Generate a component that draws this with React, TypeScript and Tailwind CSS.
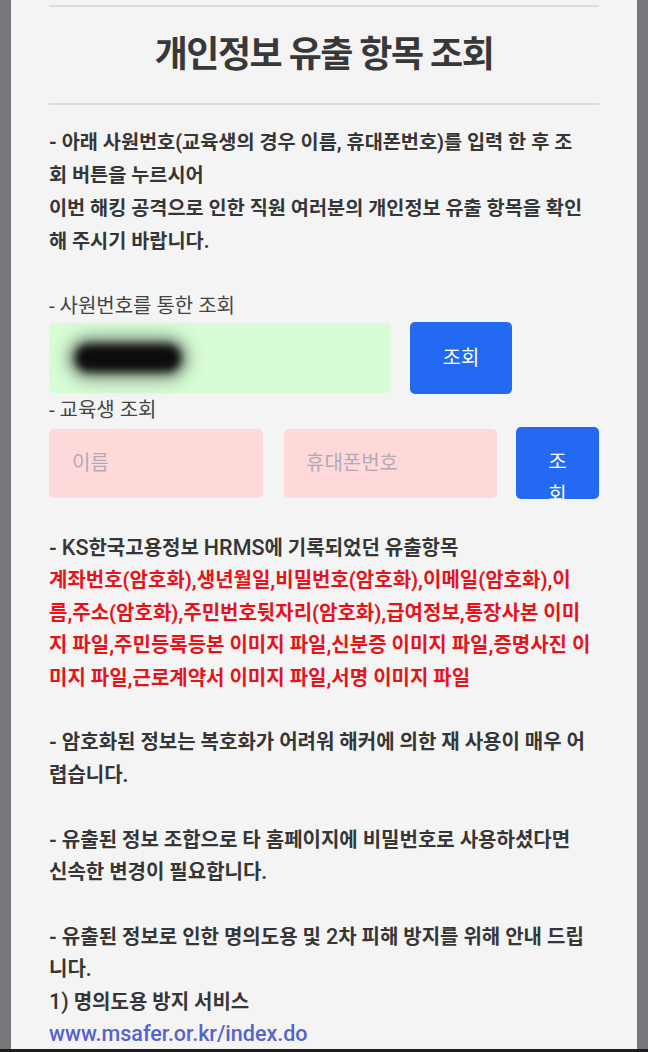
import React from "react";

const FONT = { fontFamily: 'Roboto, "Noto Sans CJK KR", "Noto Sans", sans-serif' };

export default function App() {
  return (
    <div className="min-h-screen bg-[#78787c] px-[11px]" style={FONT}>
      <div className="h-[1049px] overflow-hidden bg-[#f4f4f4] px-[38px] pt-[5px]">
        <div className="h-[2px] bg-[#dcdcdc]" />
        <h1 className="text-center text-[36px] font-bold leading-[96px] tracking-[-1.5px] text-[#383838]">
          개인정보 유출 항목 조회
        </h1>
        <div className="h-[2px] bg-[#dcdcdc]" />

        <p className="mt-[21px] whitespace-nowrap text-[19.7px] font-bold leading-[33px] text-[#363636]">
          - 아래 사원번호(교육생의 경우 이름, 휴대폰번호)를 입력 한 후 조
          <br />회 버튼을 누르시어
          <br />이번 해킹 공격으로 인한 직원 여러분의 개인정보 유출 항목을 확인
          <br />해 주시기 바랍니다.
        </p>

        <div className="mt-[35px] text-[20px] leading-[26px] text-[#444444]">- 사원번호를 통한 조회</div>
        <div className="mt-[3px] flex items-center">
          <div className="flex h-[70px] w-[342px] items-center rounded-[5px] bg-[#d8fdd6] pl-[26px]">
            <div className="relative h-[28px] w-[106px]">
              <div className="absolute -inset-[8px] rounded-full bg-[#333] opacity-50 blur-[8px]" />
              <div className="absolute inset-0 rounded-full bg-[#0c0c0c] blur-[4px]" />
            </div>
          </div>
          <button className="ml-[19px] flex h-[72px] w-[102px] items-center justify-center rounded-[5px] bg-[#2469f2] text-[20px] text-white">
            조회
          </button>
        </div>

        <div className="mt-[3px] text-[20px] leading-[26px] text-[#444444]">- 교육생 조회</div>
        <div className="mt-[4px] flex items-center">
          <div className="flex h-[69px] w-[214px] items-center rounded-[5px] bg-[#ffd9d9] pl-[23px] text-[20px] text-[#b3a9b6]">
            이름
          </div>
          <div className="ml-[21px] flex h-[69px] w-[213px] items-center rounded-[5px] bg-[#ffd9d9] pl-[22px] text-[20px] text-[#b3a9b6]">
            휴대폰번호
          </div>
          <button className="ml-[19px] flex h-[72px] w-[83px] flex-col items-center justify-start rounded-[5px] bg-[#2469f2] pt-[19px] text-[20px] leading-[33px] text-white">
            <span>조</span>
            <span>회</span>
          </button>
        </div>

        <div className="mt-[33px] whitespace-nowrap text-[20px] font-bold leading-[32.4px] text-[#363636]">
          <div>
            - <span className="text-[21.5px] font-medium">KS</span>한국고용정보{" "}
            <span className="text-[21.5px] font-medium">HRMS</span>에 기록되었던 유출항목
          </div>
          <div className="text-[#e5141b]">
            계좌번호(암호화),생년월일,비밀번호(암호화),이메일(암호화),이
            <br />름,주소(암호화),주민번호뒷자리(암호화),급여정보,통장사본 이미
            <br />지 파일,주민등록등본 이미지 파일,신분증 이미지 파일,증명사진 이
            <br />미지 파일,근로계약서 이미지 파일,서명 이미지 파일
          </div>
          <br />
          <div>
            - 암호화된 정보는 복호화가 어려워 해커에 의한 재 사용이 매우 어
            <br />렵습니다.
          </div>
          <br />
          <div>
            - 유출된 정보 조합으로 타 홈페이지에 비밀번호로 사용하셨다면
            <br />신속한 변경이 필요합니다.
          </div>
          <br />
          <div>
            - 유출된 정보로 인한 명의도용 및 <span className="text-[21.5px] font-medium">2</span>차 피해 방지를 위해 안내
            드립
            <br />니다.
          </div>
          <div>
            <span className="text-[21.5px] font-medium">1)</span> 명의도용 방지 서비스
          </div>
          <div className="text-[21.5px] font-medium text-[#5563cc]">www.msafer.or.kr/index.do</div>
        </div>
      </div>
      <div className="-mx-[11px] h-[3px] bg-[#1e1e1e]" />
    </div>
  );
}
